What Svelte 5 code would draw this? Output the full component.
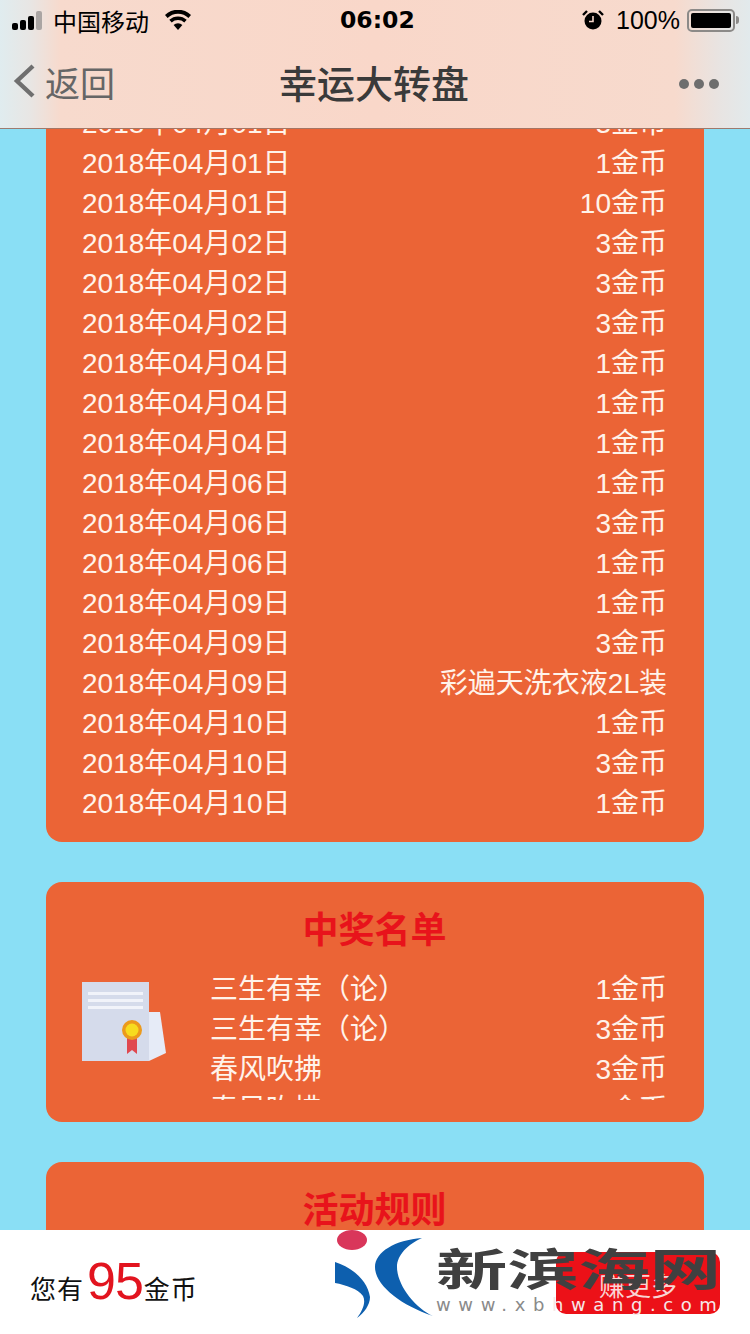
<script>
	const records = [
		['2018年04月01日', '3金币'],
		['2018年04月01日', '1金币'],
		['2018年04月01日', '10金币'],
		['2018年04月02日', '3金币'],
		['2018年04月02日', '3金币'],
		['2018年04月02日', '3金币'],
		['2018年04月04日', '1金币'],
		['2018年04月04日', '1金币'],
		['2018年04月04日', '1金币'],
		['2018年04月06日', '1金币'],
		['2018年04月06日', '3金币'],
		['2018年04月06日', '1金币'],
		['2018年04月09日', '1金币'],
		['2018年04月09日', '3金币'],
		['2018年04月09日', '彩遍天洗衣液2L装'],
		['2018年04月10日', '1金币'],
		['2018年04月10日', '3金币'],
		['2018年04月10日', '1金币']
	];

	const winners = [
		['三生有幸（论）', '1金币'],
		['三生有幸（论）', '3金币'],
		['春风吹拂', '3金币'],
		['春风吹拂', '5金币']
	];
</script>

<div class="page">
	<header class="top">
		<div class="status">
			<div class="signal"><i></i><i></i><i></i><i class="off"></i></div>
			<span class="carrier">中国移动</span>
			<svg class="wifi" width="28" height="20" viewBox="0 0 28 20">
				<path d="M14 20l-4.4-5a6.4 6.4 0 0 1 8.8 0z" />
				<path d="M7.7 12.6l-2.4-2.8a12.8 12.8 0 0 1 17.4 0l-2.4 2.8a9.2 9.2 0 0 0-12.6 0z" />
				<path d="M3.6 7.9L1 5a18.6 18.6 0 0 1 26 0l-2.6 2.9a14.8 14.8 0 0 0-20.8 0z" />
			</svg>
			<span class="time">06:02</span>
			<svg class="alarm" width="22" height="22" viewBox="0 0 22 22">
				<circle cx="11" cy="12" r="8.5" fill="#000" />
				<path d="M11 7v5.5H7" fill="none" stroke="#f8d8cb" stroke-width="1.6" />
				<path d="M1 6l4-4M21 6l-4-4" stroke="#000" stroke-width="2.4" />
			</svg>
			<span class="percent">100%</span>
			<div class="battery"><div class="level"></div></div>
			<div class="nub"></div>
		</div>
		<div class="nav">
			<div class="back">
				<svg width="26" height="38" viewBox="0 0 26 38">
					<path d="M20 4L4 19l16 15" fill="none" stroke="#6f6f6f" stroke-width="4.4" />
				</svg>
				<span>返回</span>
			</div>
			<h1>幸运大转盘</h1>
			<div class="more"><i></i><i></i><i></i></div>
		</div>
	</header>

	<main>
		<section class="card records">
			{#each records as [day, prize]}
				<div class="row"><span>{day}</span><span>{prize}</span></div>
			{/each}
		</section>

		<section class="card">
			<h2>中奖名单</h2>
			<div class="winners">
				<svg class="cert" width="84" height="80" viewBox="0 0 84 80">
					<path d="M67 30h11l6 41-17 8z" fill="#e6ebf7" />
					<rect width="67" height="79" fill="#d5dbeb" />
					<path d="M6 10h55v3H6zM6 17h55v3H6zM6 24h55v3H6z" fill="#f1f3fa" />
					<path d="M45 52h10v20l-5-4-5 4z" fill="#e0484f" />
					<circle cx="50" cy="48" r="10" fill="#ec9a1c" />
					<circle cx="50" cy="48" r="6.5" fill="#f7dc1f" />
				</svg>
				<div class="names">
					{#each winners as [name, prize]}
						<div class="row"><span>{name}</span><span>{prize}</span></div>
					{/each}
				</div>
			</div>
		</section>

		<section class="card">
			<h2>活动规则</h2>
		</section>
	</main>

	<footer class="bar">
		<p class="coins">您有<b>95</b>金币</p>
		<span class="earn">赚更多</span>
	</footer>

	<div class="logo">
		<svg width="110" height="100" viewBox="0 0 110 100">
			<ellipse cx="22" cy="10" rx="15" ry="10" fill="#d9365a" />
			<path d="M5 32C24 38 38 52 40 67C40 75 34 83 27 88C33 80 36 72 33 66C28 59 16 55 5 53z" fill="#0d5fae" />
			<path d="M92 8C65 10 45 22 45 37C45 55 70 75 103 86C85 78 67 55 67 37C67 25 78 14 92 8z" fill="#0d5fae" />
		</svg>
		<div class="wordmark">
			<strong>新滨海网</strong>
			<small><span>www.xb</span><em>hwang.com</em></small>
		</div>
	</div>
</div>

<style>
	:global(body) {
		margin: 0;
	}

	.page {
		position: relative;
		width: 750px;
		height: 1334px;
		overflow: hidden;
		background: #8adff5;
		font-family: 'Liberation Sans', 'Noto Sans CJK SC', sans-serif;
	}

	.top {
		position: absolute;
		inset: 0 0 auto 0;
		z-index: 2;
		height: 128px;
		background: linear-gradient(90deg, #e0ecef 0, #e8e6e4 4%, #f7dacd 8%, #f9d7c9 50%, #f7dacd 90%, #e8e4e2 96%, #e2eaec 100%);
		border-bottom: 1px solid rgba(110, 50, 30, 0.6);
	}

	.status {
		display: flex;
		align-items: center;
		height: 40px;
		padding-left: 12px;
		color: #000;
	}

	.signal {
		display: flex;
		align-items: flex-end;
		gap: 2px;
		height: 19px;
		width: 36px;
	}
	.signal i {
		width: 6px;
		border-radius: 2px;
		background: #000;
	}
	.signal i:nth-child(1) { height: 7px; }
	.signal i:nth-child(2) { height: 10px; }
	.signal i:nth-child(3) { height: 14px; }
	.signal i:nth-child(4) { height: 19px; }
	.signal i.off {
		background: #aaa5a3;
	}

	.carrier {
		margin-left: 5px;
		font-size: 24px;
	}

	.wifi {
		margin-left: 15px;
	}

	.time {
		position: absolute;
		left: 340px;
		font: bold 23.5px 'DejaVu Sans', sans-serif;
	}

	.alarm {
		margin-left: auto;
	}

	.percent {
		margin-left: 12px;
		font-size: 25px;
	}

	.battery {
		box-sizing: border-box;
		width: 48px;
		height: 23px;
		margin-left: 7px;
		padding: 2px;
		border: 2px solid #8c8a88;
		border-radius: 5px;
	}
	.level {
		height: 100%;
		border-radius: 2px;
		background: #000;
	}
	.nub {
		width: 3px;
		height: 8px;
		margin: 0 11px 0 1px;
		border-radius: 0 3px 3px 0;
		background: #8c8a88;
	}

	.nav {
		position: relative;
		display: flex;
		align-items: center;
		justify-content: space-between;
		height: 82px;
		padding: 0 31px 0 13px;
	}

	.back {
		display: flex;
		align-items: center;
		color: #666;
		font-size: 35px;
	}
	.back svg {
		margin-right: 6px;
	}

	h1 {
		position: absolute;
		left: 0;
		right: 2px;
		margin: 0;
		color: #3a3a3a;
		font-size: 38px;
		font-weight: 500;
		text-align: center;
	}

	.more {
		display: flex;
		gap: 5px;
		margin-top: 5px;
	}
	.more i {
		width: 10px;
		height: 10px;
		border-radius: 50%;
		background: #6e6e6e;
	}

	main {
		display: flex;
		flex-direction: column;
		gap: 40px;
		padding: 0 46px;
	}

	.card {
		padding: 20px 37px 22px 36px;
		border-radius: 16px;
		background: #eb6436;
		color: #fff3ea;
	}

	.records {
		padding-top: 102px;
		padding-bottom: 20px;
		border-radius: 0 0 16px 16px;
	}

	.row {
		display: flex;
		justify-content: space-between;
		height: 40px;
		font-size: 28px;
		line-height: 43px;
		white-space: nowrap;
	}

	h2 {
		margin: 0;
		color: #e8131b;
		font-size: 36px;
		font-weight: 700;
		line-height: 58px;
		text-align: center;
	}

	.winners {
		display: flex;
		height: 132px;
		margin-top: 8px;
	}

	.cert {
		flex: none;
		margin: 14px 45px 0 0;
	}

	.names {
		flex: 1;
		margin-left: -1px;
		overflow: hidden;
	}

	.bar {
		position: absolute;
		inset: auto 0 0 0;
		z-index: 3;
		display: flex;
		align-items: center;
		height: 104px;
		background: #fff;
	}

	.coins {
		margin: 7px 0 0 30px;
		color: #111;
		font-size: 26px;
		letter-spacing: 1px;
		line-height: 60px;
	}
	.coins b {
		margin: 0 1px 0 3px;
		color: #e2141f;
		font-size: 52px;
		font-weight: 400;
		letter-spacing: -1px;
	}

	.earn {
		position: absolute;
		left: 556px;
		top: 22px;
		box-sizing: border-box;
		width: 164px;
		height: 62px;
		padding-top: 20px;
		border-radius: 10px;
		background: #ec1118;
		color: #f8d4d4;
		font-size: 26px;
		line-height: 30px;
		text-align: center;
	}

	.logo {
		position: absolute;
		left: 330px;
		top: 1230px;
		z-index: 4;
		display: flex;
		width: 400px;
	}

	.wordmark {
		position: absolute;
		left: 106px;
		top: 6px;
		white-space: nowrap;
	}
	.wordmark strong {
		display: block;
		transform: scaleX(1.62);
		transform-origin: left center;
		color: #404040;
		font: bold 44px/62px 'Noto Sans CJK SC', sans-serif;
	}
	.wordmark small {
		display: block;
		color: #8a8a8a;
		font: 18px/14px 'DejaVu Sans', sans-serif;
		letter-spacing: 7.6px;
	}
	.wordmark em {
		color: #f6e8e8;
		font-style: normal;
	}
</style>
